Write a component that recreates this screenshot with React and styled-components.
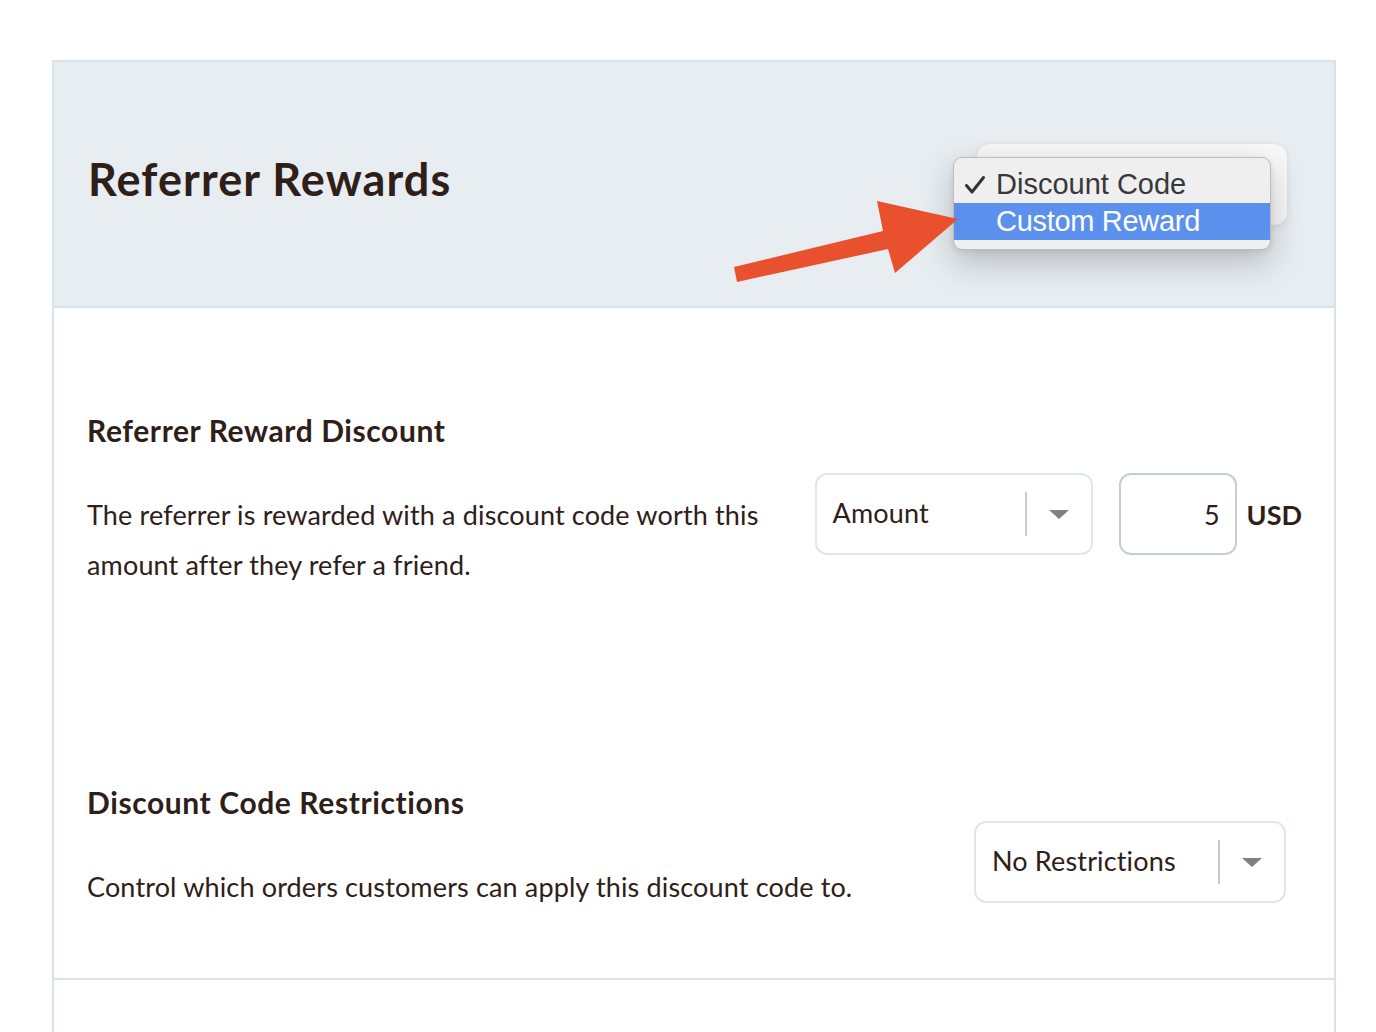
import React from "react";
import styled, { createGlobalStyle } from "styled-components";

const Global = createGlobalStyle`
  html, body { margin: 0; padding: 0; background: #ffffff; overflow: hidden; }
  body { font-family: Lato, "Noto Sans", sans-serif; color: #2e2018; }
`;

const Page = styled.div`
  position: relative;
  padding: 60px 40px 0 52px;
`;

const Card = styled.div`
  border: 2px solid #d9e3ec;
  border-bottom: none;
  background: #ffffff;
`;

const Header = styled.div`
  height: 244px;
  background: #e8edf2;
  border-bottom: 2px solid #d9e3ec;
  display: flex;
  align-items: center;
  justify-content: space-between;
  padding: 0 46px 0 34px;
`;

const Title = styled.h1`
  margin: 0 0 10px 0;
  font-size: 45px;
  font-weight: 700;
  letter-spacing: 1.1px;
  line-height: 50px;
  color: #2e2018;
`;

const Content = styled.div`
  padding: 104px 0 66px 33px;
  border-bottom: 2px solid #d9e3ec;
  display: flex;
  flex-direction: column;
  gap: 194px;
`;

const Section = styled.div`
  display: flex;
  justify-content: space-between;
  align-items: flex-start;
  padding-right: ${(p) => p.$right}px;
`;

const TextCol = styled.div`
  display: flex;
  flex-direction: column;
`;

const SectionTitle = styled.h2`
  margin: 0;
  font-size: 30px;
  font-weight: 700;
  letter-spacing: 0.6px;
  line-height: 36px;
  color: #2e2018;
`;

const Description = styled.p`
  margin: 42px 0 0 0;
  font-size: 27px;
  letter-spacing: 0.15px;
  line-height: 50px;
  color: #2e2018;
  max-width: ${(p) => p.$max}px;
`;

const Controls = styled.div`
  margin-top: ${(p) => p.$top}px;
  display: flex;
  align-items: center;
`;

const SelectBox = styled.div`
  position: relative;
  box-sizing: border-box;
  width: ${(p) => p.$w}px;
  height: ${(p) => (p.$open ? 83 : 82)}px;
  border: ${(p) => (p.$open ? "1px solid #dfe4ea" : "2px solid #dfe6ee")};
  border-radius: ${(p) => (p.$open ? 14 : 12)}px;
  background: ${(p) => (p.$open ? "#f8f8f8" : "#ffffff")};
  box-shadow: ${(p) => (p.$open ? "0 2px 6px rgba(0,0,0,0.06)" : "none")};
  display: flex;
  align-items: center;
`;

const SelectValue = styled.span`
  flex: 1;
  padding: 0 0 4px 16px;
  font-size: 27px;
  letter-spacing: 0.15px;
  color: #2e2018;
`;

const Separator = styled.span`
  width: 2px;
  height: 44px;
  background: #cacaca;
`;

const Indicator = styled.span`
  width: 64px;
  display: flex;
  justify-content: center;
  align-items: center;
`;

const Caret = styled.span`
  width: 0;
  height: 0;
  border-left: 10px solid transparent;
  border-right: 10px solid transparent;
  border-top: 9px solid #808080;
`;

const NumberBox = styled.div`
  box-sizing: border-box;
  width: 118px;
  height: 82px;
  margin-left: 26px;
  border: 2px solid #c7cdd3;
  border-radius: 12px;
  display: flex;
  align-items: center;
  justify-content: flex-end;
  padding-right: 15px;
  font-size: 27px;
  color: #2e2018;
`;

const Unit = styled.span`
  margin-left: 10px;
  font-size: 27px;
  font-weight: 700;
  color: #2e2018;
`;

const Menu = styled.div`
  position: absolute;
  left: -24px;
  top: 13px;
  width: 318px;
  box-sizing: border-box;
  padding: 8px 0 9px 0;
  background: #efefef;
  border: 1px solid #bdbdbd;
  border-radius: 9px;
  box-shadow: 0 12px 34px rgba(0, 0, 0, 0.22), 0 2px 6px rgba(0,0,0,0.08);
  font-family: "Liberation Sans", Arial, sans-serif;
`;

const MenuItem = styled.div`
  height: 37px;
  display: flex;
  align-items: center;
  padding-left: 42px;
  position: relative;
  font-size: 29px;
  letter-spacing: ${(p) => (p.$active ? "-0.3px" : "0")};
  color: ${(p) => (p.$active ? "#ffffff" : "#383838")};
  background: ${(p) => (p.$active ? "#5b90ed" : "transparent")};
`;

const Check = styled.svg`
  position: absolute;
  left: 10px;
  top: 9px;
`;

const Trailing = styled.div`
  height: 60px;
`;

const ArrowLayer = styled.svg`
  position: absolute;
  left: 0;
  top: 0;
  pointer-events: none;
`;

function Select({ width, value, open, children }) {
  return (
    <SelectBox $w={width} $open={open}>
      {!open && (
        <>
          <SelectValue>{value}</SelectValue>
          <Separator />
          <Indicator>
            <Caret />
          </Indicator>
        </>
      )}
      {children}
    </SelectBox>
  );
}

export default function App() {
  return (
    <>
      <Global />
      <Page>
        <Card>
          <Header>
            <Title>Referrer Rewards</Title>
            <Select width={312} open>
              <Menu>
                <MenuItem>
                  <Check width="22" height="20" viewBox="0 0 22 20">
                    <path d="M2.5 10.5 L8 17 L19.5 2.5" fill="none" stroke="#333" strokeWidth="3" strokeLinecap="round" strokeLinejoin="round" />
                  </Check>
                  Discount Code
                </MenuItem>
                <MenuItem $active>Custom Reward</MenuItem>
              </Menu>
            </Select>
          </Header>
          <Content>
            <Section $right={32}>
              <TextCol>
                <SectionTitle>Referrer Reward Discount</SectionTitle>
                <Description $max={690}>
                  The referrer is rewarded with a discount code worth this amount after they refer a friend.
                </Description>
              </TextCol>
              <Controls $top={61}>
                <Select width={278} value="Amount" />
                <NumberBox>5</NumberBox>
                <Unit>USD</Unit>
              </Controls>
            </Section>
            <Section $right={48}>
              <TextCol>
                <SectionTitle>Discount Code Restrictions</SectionTitle>
                <Description $max={820}>
                  Control which orders customers can apply this discount code to.
                </Description>
              </TextCol>
              <Controls $top={37}>
                <Select width={312} value="No Restrictions" />
              </Controls>
            </Section>
          </Content>
          <Trailing />
        </Card>
        <ArrowLayer width="1376" height="320" viewBox="0 0 1376 320">
          <polygon
            points="734,267 883,231 877,201 958,219 895,273 888,249 737,282"
            fill="#e9502e"
          />
        </ArrowLayer>
      </Page>
    </>
  );
}
